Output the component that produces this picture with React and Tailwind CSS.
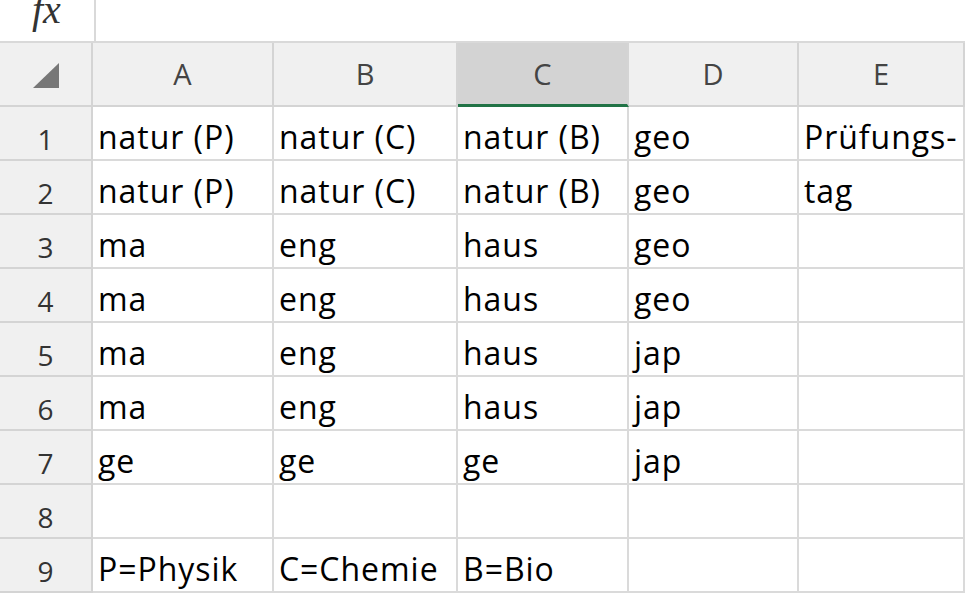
const cols = ["A", "B", "C", "D", "E"];

const rows = [
  ["natur (P)", "natur (C)", "natur (B)", "geo", "Prüfungs-"],
  ["natur (P)", "natur (C)", "natur (B)", "geo", "tag"],
  ["ma", "eng", "haus", "geo", ""],
  ["ma", "eng", "haus", "geo", ""],
  ["ma", "eng", "haus", "jap", ""],
  ["ma", "eng", "haus", "jap", ""],
  ["ge", "ge", "ge", "jap", ""],
  ["", "", "", "", ""],
  ["P=Physik", "C=Chemie", "B=Bio", "", ""],
];

export default function App() {
  return (
    <div className="w-[965px] h-[597px] overflow-hidden bg-white font-['Open_Sans','Liberation_Sans',sans-serif]">
      {/* formula bar */}
      <div className="flex h-[43px] border-b-2 border-[#d9d9d9]">
        <div className="w-[96px] border-r-2 border-[#d9d9d9] overflow-hidden">
          <span className="block -mt-[20px] pl-[32px] font-['Liberation_Serif',serif] italic text-[40px] leading-[60px] text-[#333]">
            fx
          </span>
        </div>
        <div className="flex-1" />
      </div>

      <div className="grid grid-cols-[93px_181px_184px_171px_170px_1fr]">
        {/* header row */}
        <div className="h-[64px] bg-[#f0f0f0] border-r-2 border-b-2 border-[#d4d4d4] flex items-center justify-center">
          <svg width="26" height="25" viewBox="0 0 26 25" className="mt-[2px]">
            <polygon points="0,25 26,25 26,0" fill="#777777" />
          </svg>
        </div>
        {cols.map((c) => (
          <div
            key={c}
            className={
              c === "C"
                ? "h-[64px] bg-[#d3d3d3] border-r-2 border-b-[3px] border-r-[#d4d4d4] border-b-[#217346] flex items-center justify-center text-[29px] text-[#444]"
                : "h-[64px] bg-[#f0f0f0] border-r-2 border-b-2 border-[#d4d4d4] flex items-center justify-center text-[29px] text-[#444]"
            }
          >
            {c}
          </div>
        ))}

        {rows.map((r, i) => (
          <>
            <div
              key={"h" + i}
              className="h-[54px] bg-[#f0f0f0] border-r-2 border-b-2 border-[#d4d4d4] flex items-end justify-center pb-[6px] leading-none text-[28px] text-[#333]"
            >
              {i + 1}
            </div>
            {r.map((t, j) => (
              <div
                key={i + "-" + j}
                className="h-[54px] border-r-2 border-b-2 border-[#dadada] flex items-end pl-[5px] pb-[6px] leading-none text-[32px] tracking-[0.03em] text-black whitespace-nowrap overflow-visible"
              >
                {t}
              </div>
            ))}
          </>
        ))}
      </div>
    </div>
  );
}
